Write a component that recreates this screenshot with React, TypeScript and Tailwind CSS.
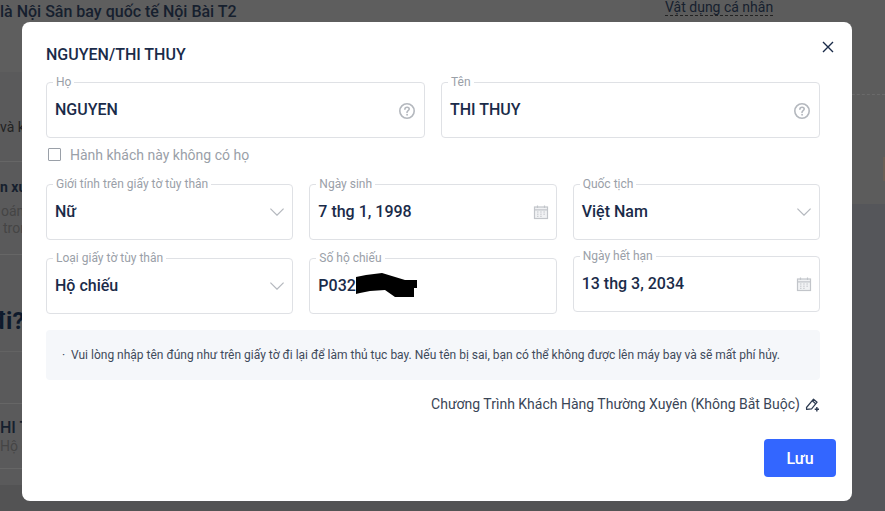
import type { ReactNode } from "react";

const font = { fontFamily: "Roboto, 'Noto Sans', sans-serif" };

function HelpIcon() {
  return (
    <svg width="18" height="18" viewBox="0 0 18 18" fill="none" stroke="#b4b8be" strokeWidth="1.6" strokeLinecap="round" className="shrink-0 mt-[2px]">
      <circle cx="9" cy="9" r="7.2" />
      <path d="M6.9 7.2c0-1.2 1-2 2.2-2s2.1.8 2.1 1.9c0 1.5-2.2 1.6-2.2 3.3" />
      <circle cx="9" cy="12.8" r=".5" fill="#b4b8be" strokeWidth="0.8" />
    </svg>
  );
}

function Chevron() {
  return (
    <svg width="14" height="8" viewBox="0 0 14 8" fill="none" stroke="#b4b8be" strokeWidth="1.2" className="shrink-0">
      <path d="M0.4 0.6l6.6 6.6 6.6-6.6" />
    </svg>
  );
}

function CalendarIcon() {
  return (
    <svg width="16" height="16" viewBox="0 0 16 16" fill="none" className="shrink-0 -mr-[1px] -mt-[1px]">
      <rect x="1.5" y="3" width="13" height="11.5" fill="#f1f2f4" stroke="#c2c5ca" strokeWidth="1.2" />
      <path d="M1.5 5.8h13M4.5 1.5v2.4M11.5 1.5v2.4" stroke="#c2c5ca" strokeWidth="1.2" />
      <path d="M4 8h1.5M7.2 8h1.5M10.4 8h1.5M4 10.2h1.5M7.2 10.2h1.5M10.4 10.2h1.5M4 12.3h1.5M7.2 12.3h1.5" stroke="#c2c5ca" strokeWidth="1" />
    </svg>
  );
}

function Field({ label, value, right }: { label: string; value: ReactNode; right?: ReactNode }) {
  return (
    <div className="relative h-14 rounded border border-[#dfe1e5] flex items-center justify-between pl-2 pr-2">
      <span className="absolute -top-[9px] left-[6px] bg-white px-[3px] text-xs leading-4 text-[#9aa0a8]">{label}</span>
      <span className="text-base leading-5 text-[#1a2b49] mb-[1px] font-medium">{value}</span>
      {right}
    </div>
  );
}

export default function App() {
  return (
    <div className="relative w-[885px] h-[511px] overflow-hidden bg-[#58585a] text-[#16202e]" style={font}>
      {/* page behind the dialog */}
      <div className="flex h-full">
        <div className="w-[640px] flex flex-col bg-[#5a5a5b]">
          <div className="h-[72px] bg-[#5e5e5e] pt-[2px] text-base font-medium leading-5 whitespace-nowrap">
            là Nội Sân bay quốc tế Nội Bài T2
          </div>
          <div className="h-[90px] border-b border-[#666] pt-[47px] text-sm leading-4 text-[#222] whitespace-nowrap">và kh</div>
          <div className="h-[93px] border-b border-[#666] pt-[17px] whitespace-nowrap">
            <div className="text-sm font-bold leading-4">n xu</div>
            <div className="text-sm leading-4 text-[#454545] mt-[8px] pl-[1px]">oán</div>
            <div className="text-sm leading-4 text-[#454545] mt-[1px] pl-[3px]">tron</div>
          </div>
          <div className="h-[97px] border-b border-[#636363] pt-[52px] -ml-[9px] text-2xl font-bold leading-7 text-[#0e1a2c] whitespace-nowrap">đi?</div>
          <div className="h-[52px] border-b border-[#666]" />
          <div className="h-[65px] border-b border-[#666] pt-[14px] whitespace-nowrap">
            <div className="text-base font-medium leading-5 text-[#16202e]">HI T</div>
            <div className="text-sm leading-4 text-[#454545]">Hộ c</div>
          </div>
          <div className="h-4" />
          <div className="flex-1 bg-[#535354]" />
        </div>
        <div className="flex-1 flex flex-col">
          <div className="h-[204px] bg-[#5c5c5c] pl-[25px] relative">
            <div className="h-[96px] relative">
              <div className="w-fit text-sm leading-4 -mt-[1px] text-[#16202e] border-b border-dashed border-[#222]">Vật dụng cá nhân</div>
              <div className="absolute -left-[25px] right-0 top-[95px] border-t border-dashed border-[#6a6a6a]" />
            </div>
            <div className="absolute right-0 top-[157px] w-[2px] h-6 bg-[#6a5f55]" />
          </div>
          <div className="flex-1 bg-[#55565a]" />
        </div>
      </div>

      {/* dialog */}
      <div className="absolute inset-0 pt-[22px] pl-[22px]">
        <div className="w-[830px] h-[479px] rounded-lg bg-white relative pt-[23px] pl-6 pr-8 flex flex-col">
          <button className="absolute top-[19px] right-[18px] w-3 h-3 flex items-center justify-center">
            <svg width="12" height="12" viewBox="0 0 12 12" fill="none" stroke="#1a2b49" strokeWidth="1.4">
              <path d="M1 1l10 10M11 1L1 11" />
            </svg>
          </button>

          <h2 className="text-base font-medium leading-5 text-[#1a2b49] h-5">NGUYEN/THI THUY</h2>

          <div className="grid grid-cols-2 gap-4 mt-[17px]">
            <Field label="Họ" value="NGUYEN" right={<HelpIcon />} />
            <Field label="Tên" value="THI THUY" right={<HelpIcon />} />
          </div>

          <label className="flex items-center gap-[9px] mt-[9px] pl-[2px] h-[15px] text-sm text-[#9aa0a8]">
            <span className="w-[13px] h-[13px] shrink-0 border-[1.5px] border-[#9aa0a8] rounded-[1px]" />
            Hành khách này không có họ
          </label>

          <div className="grid grid-cols-3 gap-4 mt-[22px]">
            <Field label="Giới tính trên giấy tờ tùy thân" value="Nữ" right={<Chevron />} />
            <Field label="Ngày sinh" value="7 thg 1, 1998" right={<CalendarIcon />} />
            <Field label="Quốc tịch" value="Việt Nam" right={<Chevron />} />
          </div>

          <div className="grid grid-cols-3 gap-4 mt-[18px] h-14">
            <Field label="Loại giấy tờ tùy thân" value="Hộ chiếu" right={<Chevron />} />
            <div className="relative">
              <Field label="Số hộ chiếu" value="P032" />
              <svg width="61" height="24" viewBox="0 0 61 24" className="absolute left-[47px] top-[15px]">
                <path d="M0 4L10 2L26 0L49 7L61 7L61 15L58 15L58 24L39 24L29 17L14 18L4 20L0 21Z" fill="#000" />
              </svg>
            </div>
            <div className="-mt-[2px]">
              <Field label="Ngày hết hạn" value="13 thg 3, 2034" right={<CalendarIcon />} />
            </div>
          </div>

          <div className="mt-4 h-[50px] rounded bg-[#f5f7fa] flex items-center pl-[16px] text-xs text-[#3f4a5a]">
            <span className="w-[9px]">·</span>
            Vui lòng nhập tên đúng như trên giấy tờ đi lại để làm thủ tục bay. Nếu tên bị sai, bạn có thể không được lên máy bay và sẽ mất phí hủy.
          </div>

          <div className="mt-[14px] h-5 flex items-center justify-end gap-[5px] text-sm text-[#3a4556]">
            Chương Trình Khách Hàng Thường Xuyên (Không Bắt Buộc)
            <svg width="15" height="15" viewBox="0 0 15 15" fill="none" stroke="#2c3a50" strokeWidth="1.2" className="shrink-0">
              <path d="M1.5 10.5L8.5 2.2l3.6 3-5.5 6.6-5 .6z" strokeLinejoin="round" />
              <path d="M7.2 3.8l3.5 3" />
              <path d="M9.7 12.2h4.3M11.85 10v4.4" strokeWidth="1.4" />
            </svg>
          </div>

          <div className="flex justify-end -mr-4 mt-[25px]">
            <button className="w-[72px] h-[38px] rounded bg-[#3366ff] text-white text-base font-medium pt-[1px]">Lưu</button>
          </div>
        </div>
      </div>
    </div>
  );
}
